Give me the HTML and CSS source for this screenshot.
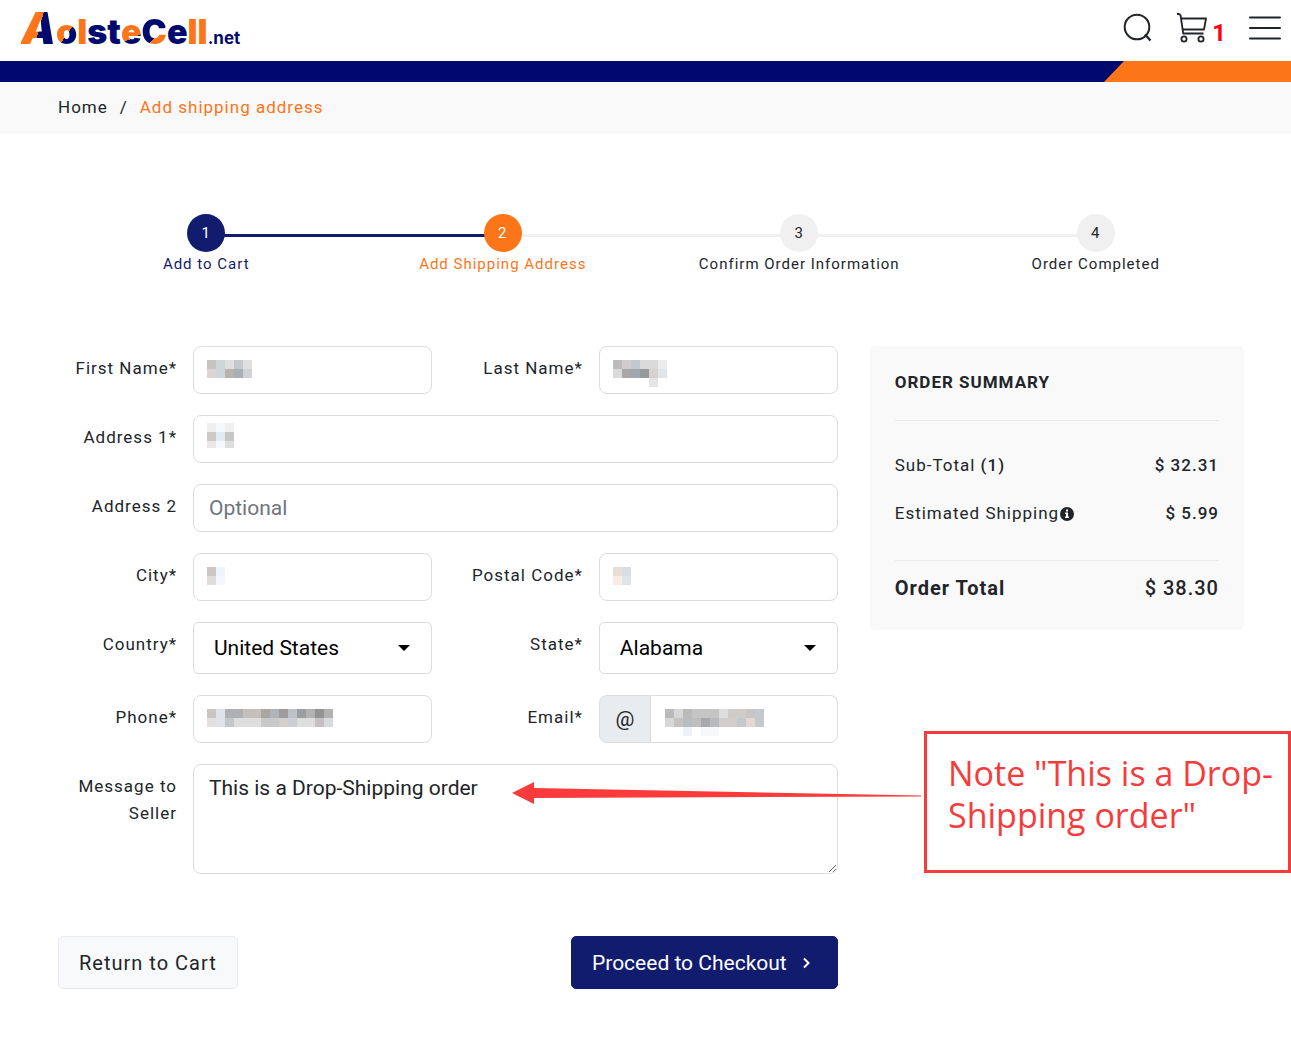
FILE: index.html
```html
<!DOCTYPE html>
<html lang="en">
<head>
    <meta charset="utf-8">
    <meta name="viewport" content="width=device-width, initial-scale=1">
    <title>Add shipping address</title>
    <link rel="stylesheet" href="styles.css">
</head>
<body>
    <header class="site-header">
        <a class="logo" href="#"><span class="logo-a">A</span><span class="logo-o">o</span><span class="orange">l</span>st<span class="logo-e">e</span><span class="logo-c">C</span>e<span class="orange">ll</span><span class="logo-net">.net</span></a>
        <nav class="header-icons">
            <a class="search-link" href="#" aria-label="Search">
                <svg width="30" height="30" viewBox="0 0 30 30" fill="none" stroke="#212529" stroke-width="2">
                    <circle cx="14" cy="14" r="12.3"/>
                    <path d="M22 21.5l5.500 6" stroke-width="2.400"/>
                </svg>
            </a>
            <a class="cart-link" href="#" aria-label="Cart">
                <svg width="32" height="32" viewBox="0 0 32 32" fill="none" stroke="#212529" stroke-width="1.800" stroke-linejoin="round">
                    <path d="M1 2h1.500q1.800 0 2.200 2l2.500 17.500h20.300"/>
                    <path d="M5 6.500h25l-2 11H7"/>
                    <circle cx="8" cy="27" r="2.600"/>
                    <circle cx="25" cy="27" r="2.600"/>
                </svg>
                <span class="cart-count">1</span>
            </a>
            <button class="menu-button" type="button" aria-label="Menu">
                <svg width="32" height="24" viewBox="0 0 32 24" stroke="#212529" stroke-width="2" stroke-linecap="round">
                    <path d="M1 1.500h30M1 12h30M1 22.500h30"/>
                </svg>
            </button>
        </nav>
    </header>
    <div class="color-bar"></div>
    <nav class="breadcrumb">
        <a href="#">Home</a>
        <span>/</span>
        <span class="current">Add shipping address</span>
    </nav>

    <main class="page">
        <ol class="steps">
            <li class="step done"><span class="step-number">1</span>Add to Cart</li>
            <li class="step active"><span class="step-number">2</span>Add Shipping Address</li>
            <li class="step"><span class="step-number">3</span>Confirm Order Information</li>
            <li class="step"><span class="step-number">4</span>Order Completed</li>
        </ol>

        <div class="checkout">
            <form class="address-form">
                <div class="fields">
                    <label for="firstName">First Name*</label>
                    <div class="field">
                        <input type="text" id="firstName">
                        <svg class="mask" width="45" height="18">
                            <path fill="#c9c3bf" d="M0 0h9v9H0z"/><path fill="#ced6da" d="M9 0h9v18H9z"/><path fill="#dfdfdf" d="M18 0h9v9h-9zM36 0h9v9h-9z"/><path fill="#c5c8ca" d="M27 0h9v9h-9z"/>
                            <path fill="#dad5d3" d="M0 9h9v9H0z"/><path fill="#b9b2ad" d="M18 9h9v9h-9z"/><path fill="#a8afb7" d="M27 9h9v9h-9z"/><path fill="#d0d1d4" d="M36 9h9v9h-9z"/>
                        </svg>
                    </div>
                    <label for="lastName">Last Name*</label>
                    <div class="field">
                        <input type="text" id="lastName">
                        <svg class="mask" width="54" height="27">
                            <path fill="#bcbcbc" d="M0 0h9v9H0z"/><path fill="#d1cccb" d="M9 0h9v9H9z"/><path fill="#c1c9d0" d="M18 0h9v9h-9z"/><path fill="#dadada" d="M27 0h18v9H27zM0 9h9v9H0z"/><path fill="#ececec" d="M45 0h9v9h-9z"/>
                            <path fill="#aaa7a4" d="M9 9h9v9H9z"/><path fill="#a2a7ad" d="M18 9h9v9h-9z"/><path fill="#959a9b" d="M27 9h9v9h-9z"/><path fill="#d7d2d1" d="M36 9h9v9h-9z"/><path fill="#dfe6e9" d="M45 9h9v9h-9z"/><path fill="#e6e4e4" d="M36 18h9v9h-9z"/>
                        </svg>
                    </div>

                    <label for="address1">Address 1*</label>
                    <div class="field wide">
                        <input type="text" id="address1">
                        <svg class="mask mask-tall" width="27" height="25">
                            <path fill="#efefef" d="M0 0h9v9H0zM18 0h9v9h-9z"/><path fill="#f5f8fc" d="M9 0h9v25H9z"/>
                            <path fill="#cfc8c3" d="M0 9h9v9H0z"/><path fill="#e3ebf2" d="M9 9h9v9H9z"/><path fill="#c6c6c6" d="M18 9h9v9h-9z"/><path fill="#ebe6e3" d="M0 18h9v7H0z"/><path fill="#dedede" d="M18 18h9v7h-9z"/>
                        </svg>
                    </div>

                    <label for="address2">Address 2</label>
                    <div class="field wide"><input type="text" id="address2" placeholder="Optional"></div>

                    <label for="city">City*</label>
                    <div class="field">
                        <input type="text" id="city">
                        <svg class="mask" width="18" height="18">
                            <path fill="#cdc6c2" d="M0 0h9v9H0z"/><path fill="#edf4fb" d="M9 0h9v9H9z"/><path fill="#e2dcd8" d="M0 9h9v9H0z"/><path fill="#f2f8fe" d="M9 9h9v9H9z"/>
                        </svg>
                    </div>
                    <label for="postalCode">Postal Code*</label>
                    <div class="field">
                        <input type="text" id="postalCode">
                        <svg class="mask" width="18" height="18">
                            <path fill="#e9ddd7" d="M0 0h9v9H0z"/><path fill="#d5dee4" d="M9 0h9v9H9z"/><path fill="#faece4" d="M0 9h9v9H0z"/><path fill="#dce4e9" d="M9 9h9v9H9z"/>
                        </svg>
                    </div>

                    <label for="country">Country*</label>
                    <div class="field">
                        <select id="country"><option>United States</option></select>
                        <svg class="caret" width="12" height="6"><path d="M0 0h12L6 6z"/></svg>
                    </div>
                    <label for="state">State*</label>
                    <div class="field">
                        <select id="state"><option>Alabama</option></select>
                        <svg class="caret" width="12" height="6"><path d="M0 0h12L6 6z"/></svg>
                    </div>

                    <label for="phone">Phone*</label>
                    <div class="field">
                        <input type="tel" id="phone">
                        <svg class="mask" width="126" height="18">
                            <path fill="#cbc4c0" d="M0 0h9v9H0z"/><path fill="#dde3e9" d="M9 0h9v18H9z"/><path fill="#aeb0b3" d="M18 0h18v9H18z"/><path fill="#c4c0bd" d="M36 0h18v9H36z"/><path fill="#a9a6a4" d="M54 0h9v9h-9z"/><path fill="#aeb4ba" d="M63 0h9v9h-9z"/><path fill="#a09c9c" d="M72 0h9v9h-9z"/><path fill="#bcc2c6" d="M81 0h9v9h-9z"/><path fill="#9b9ea2" d="M90 0h9v9h-9z"/><path fill="#b2b2b2" d="M99 0h9v9h-9zM117 0h9v9h-9z"/><path fill="#929494" d="M108 0h9v9h-9z"/>
                            <path fill="#e5e0de" d="M0 9h9v9H0z"/><path fill="#c4c6c8" d="M18 9h9v9h-9z"/><path fill="#dedede" d="M27 9h27v9H27zM90 9h18v9H90z"/><path fill="#c9c9c9" d="M54 9h18v9H54z"/><path fill="#d2cfcd" d="M72 9h9v9h-9z"/><path fill="#c9cfd4" d="M81 9h9v9h-9z"/><path fill="#c4c0c3" d="M108 9h9v9h-9z"/><path fill="#d9dadd" d="M117 9h9v9h-9z"/>
                        </svg>
                    </div>
                    <label for="email">Email*</label>
                    <div class="field email-group">
                        <span class="at-sign">@</span>
                        <div class="field">
                            <input type="email" id="email">
                            <svg class="mask" width="99" height="27">
                                <path fill="#bababa" d="M0 0h9v9H0zM18 0h9v9h-9z"/><path fill="#d7d7d7" d="M9 0h9v9H9zM0 9h9v9H0z"/><path fill="#c5c5c5" d="M27 0h27v9H27z"/><path fill="#dedede" d="M54 0h9v9h-9z"/><path fill="#cfccca" d="M63 0h18v9H63z"/><path fill="#c7c5c6" d="M81 0h9v9h-9z"/><path fill="#c4c9ce" d="M90 0h9v18h-9z"/>
                                <path fill="#c6c2c0" d="M9 9h9v9H9z"/><path fill="#b7bdc1" d="M18 9h9v9h-9z"/><path fill="#bebebe" d="M27 9h9v9h-9z"/><path fill="#a9a9ab" d="M36 9h9v9h-9z"/><path fill="#b7babd" d="M45 9h9v9h-9z"/><path fill="#d1cecc" d="M54 9h18v9H54z"/><path fill="#c5c9cd" d="M72 9h9v9h-9z"/><path fill="#e3d9cf" d="M81 9h9v9h-9z"/><path fill="#eef2f5" d="M18 18h9v9h-9z"/><path fill="#f6f8fa" d="M36 18h18v9H36z"/>
                            </svg>
                        </div>
                    </div>

                    <label for="message">Message to Seller</label>
                    <div class="field wide">
                        <textarea id="message">This is a Drop-Shipping order</textarea>
                        <svg class="arrow" width="409" height="24" viewBox="0 0 409 24">
                            <path fill="#fb3b3b" d="M0 11L22 0v6L409 13.500v1L22 16v6z"/>
                        </svg>
                    </div>
                </div>
                <div class="form-actions">
                    <button class="btn btn-light" type="button">Return to Cart</button>
                    <button class="btn btn-primary" type="submit">Proceed to Checkout
                        <svg width="8" height="12" fill="none" stroke="#fff" stroke-width="2"><path d="M1 1.500L5.500 6 1 10.500"/></svg>
                    </button>
                </div>
            </form>

            <aside class="summary">
                <h2>ORDER SUMMARY</h2>
                <div class="summary-rows">
                    <div class="summary-row">
                        <span>Sub-Total <b>(1)</b></span>
                        <b>$ 32.31</b>
                    </div>
                    <div class="summary-row">
                        <span class="shipping">Estimated Shipping<svg width="14" height="14" viewBox="0 0 14 14">
                            <circle cx="7" cy="7" r="7" fill="#212529"/>
                            <path fill="#fff" d="M6 2.500h2v2H6zM5 5.500h3v4h1V11H5V9.500h1V7H5z"/>
                        </svg></span>
                        <b>$ 5.99</b>
                    </div>
                </div>
                <div class="summary-row total">
                    <strong>Order Total</strong>
                    <b>$ 38.30</b>
                </div>
            </aside>
        </div>

        <div class="note">Note "This is a Drop-Shipping order"</div>
    </main>
</body>
</html>
```

FILE: styles.css
```css
* {
    box-sizing: border-box;
}
body {
    margin: 0;
    background: #fff;
    color: #212529;
    font-family: Roboto, "Liberation Sans", sans-serif;
    font-size: 17px;
    line-height: 27px;
}
a {
    color: inherit;
    text-decoration: none;
}

/* header */
.site-header {
    display: flex;
    justify-content: space-between;
    align-items: center;
    height: 61px;
    padding: 0 10px 6px 21px;
}
.logo {
    display: flex;
    align-items: baseline;
    color: #000a6e;
    font-family: Inter, sans-serif;
    font-size: 34px;
    font-weight: 900;
    line-height: 34px;
}
.orange {
    color: #fd7519;
}
.logo-a,
.logo-o,
.logo-e,
.logo-c {
    background-clip: text;
    -webkit-background-clip: text;
    color: transparent;
}
.logo-a {
    font-size: 44px;
    font-style: italic;
    line-height: 54px;
    background-image: linear-gradient(105deg, #fd7519 52%, #000a6e 52%);
}
.logo-o {
    background-image: linear-gradient(125deg, #fd7519 55%, #000a6e 55%);
}
.logo-e {
    background-image: linear-gradient(155deg, #fd7519 65%, #000a6e 65%);
}
.logo-c {
    background-image: linear-gradient(135deg, #000a6e 60%, #fd7519 60%);
}
.logo-net {
    font-size: 17px;
    font-weight: 700;
}
.header-icons {
    display: flex;
    align-items: center;
    gap: 23px;
}
.header-icons svg {
    display: block;
}
.cart-link {
    display: flex;
    align-items: flex-end;
    gap: 4px;
}
.cart-count {
    color: #fa0019;
    font-size: 24px;
    font-weight: 700;
    line-height: 22px;
}
.menu-button {
    padding: 0;
    border: none;
    background: none;
    cursor: pointer;
}
.color-bar {
    height: 21px;
    background: #000a6e;
}
.color-bar::after {
    content: "";
    display: block;
    width: 187px;
    height: 100%;
    margin-left: auto;
    background: #fd7519;
    clip-path: polygon(20px 0, 100% 0, 100% 100%, 0 100%);
}
.breadcrumb {
    display: flex;
    gap: 12px;
    padding: 12px 58px 13px;
    background: #f9f9f9;
    letter-spacing: 1px;
}
.breadcrumb .current {
    color: #fd7519;
}

.page {
    position: relative;
    padding: 80px 47px 66px 58px;
}

/* progress steps */
.steps {
    display: grid;
    grid-template-columns: repeat(4, 1fr);
    margin: 0;
    padding: 0;
    list-style: none;
}
.step {
    position: relative;
    display: flex;
    flex-direction: column;
    align-items: center;
    font-size: 15px;
    line-height: 24px;
    letter-spacing: 1px;
}
.step-number {
    z-index: 1;
    width: 38px;
    height: 38px;
    border-radius: 50%;
    background: #f0f0f0;
    line-height: 38px;
    text-align: center;
}
.step:not(:last-child)::before {
    content: "";
    position: absolute;
    top: 20px;
    left: 50%;
    width: 100%;
    height: 3px;
    background: #f0f0f0;
}
.step.done {
    color: #111c6f;
}
.step.done::before,
.step.done .step-number {
    background: #111c6f;
}
.step.active {
    color: #fd7519;
}
.step.active .step-number {
    background: #fd7519;
}
.step.done .step-number,
.step.active .step-number {
    color: #fff;
}

/* form */
.checkout {
    display: grid;
    grid-template-columns: 25fr 12fr;
    align-items: start;
    gap: 32px;
    margin-top: 70px;
}
.fields {
    display: grid;
    grid-template-columns: 119px 1fr 135px 1fr;
    gap: 21px 16px;
}
.fields label {
    padding-top: 9px;
    text-align: right;
    letter-spacing: 1px;
}
.field {
    position: relative;
    min-width: 0;
}
.field.wide {
    grid-column: 2 / -1;
}
input,
select,
textarea {
    display: block;
    width: 100%;
    height: 48px;
    padding: 0 15px;
    border: 1px solid #dadcde;
    border-radius: 8px;
    background: #fff;
    color: #212529;
    font-family: inherit;
    font-size: 21px;
}
input::placeholder {
    color: #6c757d;
}
select {
    height: 52px;
    padding: 0 20px;
    border-radius: 5px;
    color: #000;
    appearance: none;
}
textarea {
    height: 110px;
    padding: 10px 15px;
    line-height: 27px;
    resize: vertical;
}
.mask,
.caret,
.arrow {
    position: absolute;
    pointer-events: none;
}
.mask {
    top: 14px;
    left: 14px;
}
.mask-tall {
    top: 8px;
}
.caret {
    top: 23px;
    right: 22px;
}
.arrow {
    top: 18px;
    left: 319px;
}
.email-group {
    display: flex;
}
.email-group .field {
    flex: 1;
}
.email-group input {
    border-left: none;
    border-radius: 0 8px 8px 0;
}
.at-sign {
    width: 52px;
    border: 1px solid #dadcde;
    border-radius: 8px 0 0 8px;
    background: #e9ecef;
    font-size: 21px;
    line-height: 46px;
    text-align: center;
}
.form-actions {
    display: flex;
    justify-content: space-between;
    margin-top: 62px;
}
.btn {
    display: flex;
    align-items: center;
    gap: 16px;
    height: 53px;
    padding: 0 20px;
    border: 1px solid #e9eaee;
    border-radius: 5px;
    background: #f8f9fa;
    color: #212529;
    font-family: inherit;
    font-size: 21px;
    cursor: pointer;
}
.btn-light {
    font-size: 20px;
    letter-spacing: 1px;
}
.btn-primary {
    padding-right: 26px;
    border-color: #111c6f;
    background: #111c6f;
    color: #fff;
}

/* order summary */
.summary {
    padding: 23px 25px 24px;
    border-radius: 5px;
    background: #f9f9f9;
    letter-spacing: 1px;
}
.summary h2 {
    margin: 0;
    padding-bottom: 24px;
    border-bottom: 1px solid #e9e9e9;
    font-size: 17px;
    font-weight: 700;
}
.summary b {
    font-weight: 500;
}
.summary-rows {
    display: grid;
    gap: 21px;
    padding: 31px 0 33px;
    border-bottom: 1px solid #e9e9e9;
}
.summary-row {
    display: flex;
    justify-content: space-between;
}
.shipping {
    display: flex;
    align-items: center;
    gap: 1px;
}
.summary .total {
    padding: 14px 0 4px;
    font-size: 20px;
}

.note {
    position: absolute;
    top: 597px;
    right: 0;
    width: 367px;
    height: 142px;
    padding: 18px 10px 0 21px;
    border: 3px solid #f43c3c;
    background: #fff;
    color: #f43c3c;
    font-family: "Open Sans", "Noto Sans", sans-serif;
    font-size: 34px;
    line-height: 42px;
}
```
